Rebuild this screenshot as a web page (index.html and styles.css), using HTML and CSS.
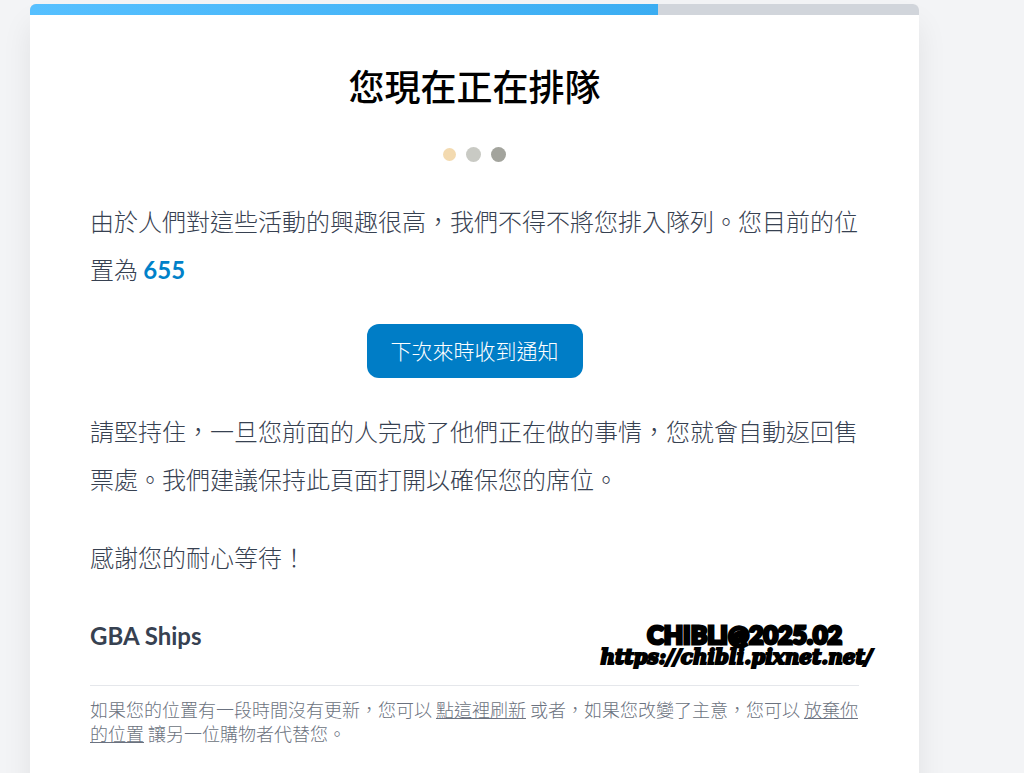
FILE: index.html
```html
<!DOCTYPE html>
<html lang="zh-Hant">
<head>
<meta charset="UTF-8">
<meta name="viewport" content="width=device-width, initial-scale=1.0">
<title>您現在正在排隊</title>
<link rel="stylesheet" href="styles.css">
</head>
<body>
    <main class="queue-card">
        <div class="progress">
            <div class="progress-bar" style="width: 70.6%"></div>
        </div>
        <div class="content">
            <h1>您現在正在排隊</h1>
            <div class="loader">
                <span class="dot dot-sand"></span>
                <span class="dot dot-light"></span>
                <span class="dot dot-dark"></span>
            </div>
            <p>由於人們對這些活動的興趣很高，我們不得不將您排入隊列。您目前的位置為 <strong class="position">655</strong></p>
            <button type="button" class="notify">下次來時收到通知</button>
            <p>請堅持住，一旦您前面的人完成了他們正在做的事情，您就會自動返回售票處。我們建議保持此頁面打開以確保您的席位。</p>
            <p>感謝您的耐心等待！</p>
            <div class="signature">
                <span class="sender">GBA Ships</span>
                <!-- photo credit, lies over the card -->
                <div class="credit">
                    <span class="credit-name">CHIBLI@2025.02</span>
                    <span class="credit-url">https://chibli.pixnet.net/</span>
                </div>
            </div>
            <footer class="note">如果您的位置有一段時間沒有更新，您可以 <a href="#">點這裡刷新</a> 或者，如果您改變了主意，您可以 <a href="#">放棄你的位置</a> 讓另一位購物者代替您。</footer>
        </div>
    </main>
</body>
</html>
```

FILE: styles.css
```css
body {
    margin: 0;
    background: #f3f4f6;
    color: #374151;
    font-family: "Noto Sans CJK TC", sans-serif;
    font-size: 24px;
    font-weight: 300;
    line-height: 48px;
}

.queue-card {
    margin: 4px 105px 0 30px;
    background: #fff;
    border-radius: 6px 6px 0 0;
    box-shadow: 0 20px 30px rgba(0, 0, 0, 0.08);
}

.progress {
    height: 11px;
    background: #d1d5db;
    border-radius: 6px 6px 0 0;
    overflow: hidden;
}
.progress-bar {
    height: 100%;
    background: linear-gradient(to right, #56c0ff, #3badf2);
}

.content {
    display: flex;
    flex-direction: column;
    padding: 46px 60px;
}

h1 {
    margin: 0;
    color: #000;
    font-size: 36px;
    font-weight: 500;
    text-align: center;
}

.loader {
    display: flex;
    justify-content: center;
    align-items: center;
    gap: 10px;
    height: 16px;
    margin: 37px 0 35px;
}
.dot {
    width: 15px;
    height: 15px;
    border-radius: 50%;
}
.dot-sand {
    width: 13px;
    height: 13px;
    background: #f3dab0;
}
.dot-light {
    background: #c9cac4;
}
.dot-dark {
    background: #a3a49d;
}

p {
    margin: 0 0 30px;
}
.position {
    color: #0081c9;
    font-family: Lato, sans-serif;
    font-weight: 700;
}

.notify {
    align-self: center;
    margin-bottom: 29px;
    padding: 0 24px 2px;
    border: 0;
    border-radius: 12px;
    background: #007dc6;
    color: #fff;
    font: inherit;
    font-size: 21px;
    line-height: 52px;
    cursor: pointer;
}

.signature {
    position: relative;
    padding-bottom: 25px;
    border-bottom: 1px solid #e5e7eb;
}
.sender {
    font-family: Lato, sans-serif;
    font-weight: 700;
}

.credit {
    position: absolute;
    top: 12px;
    right: -13px;
    display: flex;
    flex-direction: column;
    align-items: flex-end;
    color: #000;
    line-height: 23px;
}
.credit-name {
    padding-right: 30px;
    font-family: Lato, sans-serif;
    font-size: 25px;
    font-weight: 900;
    -webkit-text-stroke: 3px #000;
}
.credit-url {
    font-family: "DejaVu Serif", serif;
    font-size: 20px;
    font-style: italic;
    font-weight: 700;
    -webkit-text-stroke: 2px #000;
}

.note {
    padding-top: 11px;
    color: #6b7280;
    font-size: 18px;
    line-height: 24px;
}
.note a {
    color: inherit;
}
```
